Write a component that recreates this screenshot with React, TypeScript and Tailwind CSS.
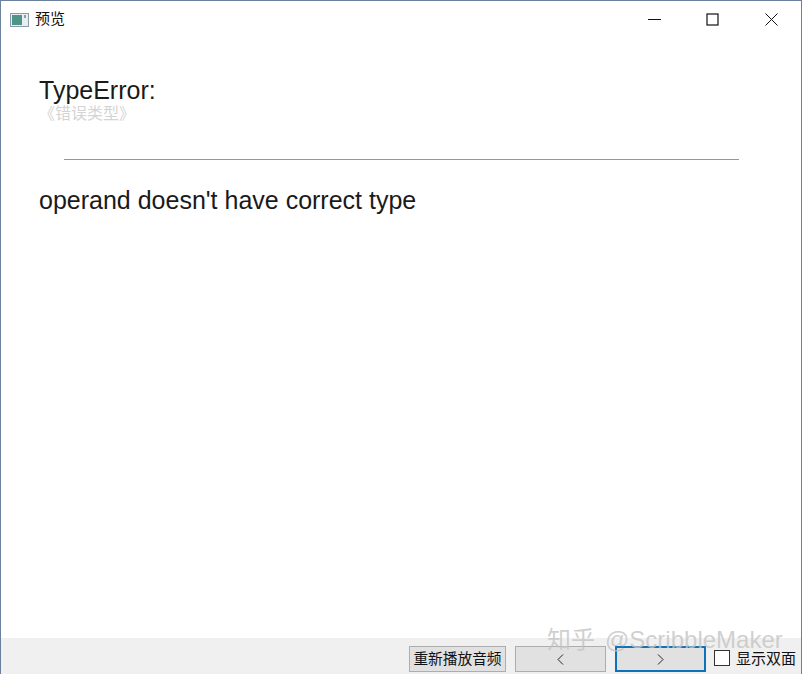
const sans = "font-['Liberation_Sans','Noto_Sans_CJK_SC',sans-serif]";

function WindowIcon() {
  return (
    <svg width="19" height="14" viewBox="0 0 19 14">
      <rect x="0.5" y="0.5" width="18" height="13" fill="#e8eef0" stroke="#8a9aa8" />
      <rect x="2" y="2" width="10" height="10" fill="#4f9489" />
      <rect x="14" y="2" width="2" height="3" fill="#7fa8a0" />
    </svg>
  );
}

function Button({ children, className }: { children?: React.ReactNode; className?: string }) {
  return (
    <div className={`flex h-[26px] items-center justify-center bg-[#e1e1e1] ${className ?? "border border-[#adadad]"}`}>
      {children}
    </div>
  );
}

function Chevron({ left }: { left?: boolean }) {
  return (
    <svg width="7" height="11" viewBox="0 0 7 11" fill="none" stroke="#222" strokeWidth="1">
      <path d={left ? "M6 0.5 L1 5.5 L6 10.5" : "M1 0.5 L6 5.5 L1 10.5"} />
    </svg>
  );
}

export default function App() {
  return (
    <div className={`relative flex h-[674px] w-[802px] flex-col overflow-hidden border-x border-t border-[#6b7f9f] bg-white text-[#1a1a1a] ${sans}`}>
      <div className="flex h-[37px] items-center justify-between">
        <div className="flex items-center gap-[6px] pl-[9px]">
          <WindowIcon />
          <span className="text-[15px] text-[#111]">预览</span>
        </div>
        <div className="flex items-center">
          <div className="flex w-[58px] justify-center">
            <svg width="13" height="13" viewBox="0 0 13 13" stroke="#111" strokeWidth="1"><path d="M0 6.5 H13" /></svg>
          </div>
          <div className="flex w-[58px] justify-center">
            <svg width="13" height="13" viewBox="0 0 13 13" fill="none" stroke="#111" strokeWidth="1.2"><rect x="1" y="1" width="11" height="11" /></svg>
          </div>
          <div className="flex w-[60px] justify-center">
            <svg width="13" height="13" viewBox="0 0 13 13" stroke="#111" strokeWidth="1"><path d="M0.5 0.5 L12.5 12.5 M12.5 0.5 L0.5 12.5" /></svg>
          </div>
        </div>
      </div>

      <div className="flex-1 pl-[38px] pt-[38px]">
        <div className="text-[25px] leading-[28px]">TypeError:</div>
        <div className="mt-[1px] text-[16px] leading-[18px] text-[#d4d4d4]">《错误类型》</div>
        <div className="ml-[25px] mt-[36px] h-px w-[675px] bg-[#969696]" />
        <div className="mt-[26px] text-[25px] leading-[28px]">operand doesn't have correct type</div>
      </div>

      <div className="flex h-[36px] items-start justify-end bg-[#f0f0f0] pr-[5px] pt-[8px] text-[#111]">
        <Button className="w-[97px] border border-[#adadad] text-[14.7px]">重新播放音频</Button>
        <Button className="ml-[9px] w-[91px] border border-[#adadad]"><Chevron left /></Button>
        <Button className="ml-[9px] w-[91px] border-2 border-[#0f72b8]"><Chevron /></Button>
        <div className="ml-[8px] mt-[4px] h-[16px] w-[16px] border border-[#333] bg-white" />
        <span className="ml-[6px] text-[15px] leading-[26px]">显示双面</span>
      </div>

      <div className="absolute left-[546px] top-[628px] flex items-center gap-[10px] text-[24px] leading-[22px] text-[#c4c4c4]/80">
        <span>知乎</span>
        <span>@ScribbleMaker</span>
      </div>
    </div>
  );
}
